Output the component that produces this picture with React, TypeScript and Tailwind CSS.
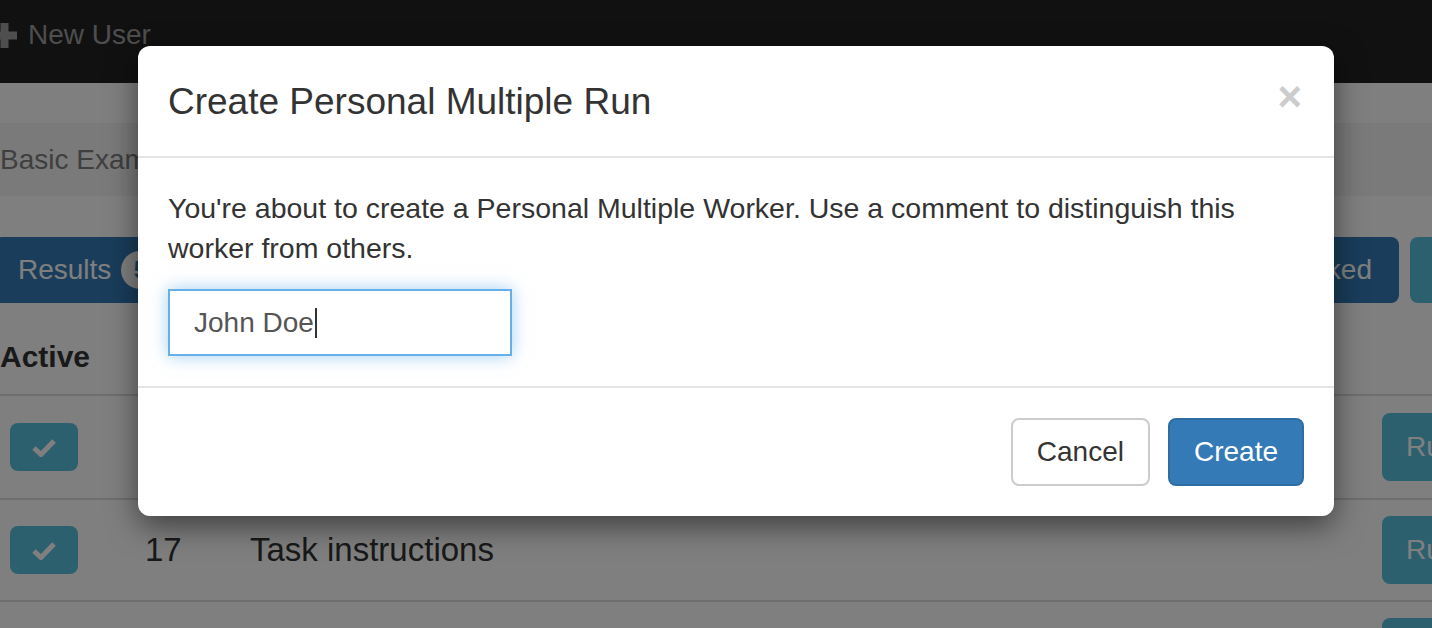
import React from "react";

function CheckIcon() {
  return (
    <svg width="24" height="19" viewBox="0 0 24 19" fill="none">
      <polyline points="2,10 9,16.5 22,3" stroke="#ffffff" strokeWidth="5" strokeLinejoin="miter" />
    </svg>
  );
}

function PlusIcon() {
  return (
    <svg width="25" height="25" viewBox="0 0 25 25">
      <rect x="8.5" y="0" width="8" height="25" fill="#9d9d9d" />
      <rect x="0" y="8.5" width="25" height="8" fill="#9d9d9d" />
    </svg>
  );
}

function Row({ id, title, h }: { id: string; title: string; h: string }) {
  return (
    <div className={`flex w-[1492px] items-center border-t-2 border-[#dddddd] ${h}`}>
      <div className="flex w-[145px] shrink-0 pl-[10px]">
        <div className="flex h-[48px] w-[68px] items-center justify-center rounded-[8px] bg-[#5bc0de]">
          <CheckIcon />
        </div>
      </div>
      <div className="w-[105px] shrink-0 text-[33px] leading-[40px] text-[#333333]">{id}</div>
      <div className="min-w-0 flex-1 text-[33px] leading-[40px] text-[#333333]">{title}</div>
      <div className="flex h-[68px] w-[110px] shrink-0 items-center rounded-[8px] bg-[#5bc0de] px-[24px] text-[28px] text-white">
        Run
      </div>
    </div>
  );
}

export default function App() {
  return (
    <div className="relative h-[628px] w-[1432px] overflow-hidden bg-white font-['Liberation_Sans',Arial,sans-serif]">
      {/* Background page */}
      <div className="flex h-[83px] items-start bg-[#222222] pt-[15px]">
        <div className="ml-[-8px] flex items-center gap-[11px] text-[28px] leading-[40px] text-[#9d9d9d]">
          <PlusIcon />
          <span>New User</span>
        </div>
      </div>
      <div className="h-[40px]" />
      <div className="flex h-[73px] items-center bg-[#f5f5f5] text-[28px] leading-[40px] text-[#7f7f7f]">
        Basic Example Project
      </div>
      <div className="h-[41px]" />
      <div className="flex h-[66px] w-[1492px] items-stretch justify-between">
        <div className="ml-[-6px] flex items-center gap-[10px] rounded-[8px] bg-[#337ab7] px-[24px] text-[28px] text-white">
          <span>Results</span>
          <span className="flex h-[38px] min-w-[38px] items-center justify-center rounded-full bg-white px-[12px] text-[24px] font-bold text-[#337ab7]">
            5
          </span>
        </div>
        <div className="flex items-stretch gap-[11px]">
          <div className="flex items-center rounded-[8px] bg-[#337ab7] px-[27px] text-[28px] text-white">
            Checked
          </div>
          <div className="w-[82px] rounded-[8px] bg-[#5bc0de]" />
        </div>
      </div>
      <div className="h-[91px] pt-[34px] text-[30px] font-bold leading-[40px] text-[#333333]">Active</div>
      <Row id="16" title="Welcome" h="h-[104px]" />
      <Row id="17" title="Task instructions" h="h-[102px]" />
      <Row id="18" title="Questionnaire" h="h-[102px]" />

      {/* Backdrop */}
      <div className="absolute inset-0 bg-black/50" />

      {/* Modal */}
      <div className="absolute left-[138px] top-[46px] w-[1196px] rounded-[12px] bg-white text-[#333333] shadow-[0_10px_30px_rgba(0,0,0,0.5)]">
        <div className="flex items-center justify-between border-b-2 border-[#e5e5e5] pb-[28px] pl-[30px] pr-[32px] pt-[30px]">
          <h4 className="text-[37px] font-normal leading-[52px] text-[#333333]">Create Personal Multiple Run</h4>
          <span className="mt-[-10px] text-[42px] font-bold leading-[42px] text-[#cccccc]">×</span>
        </div>
        <div className="p-[30px]">
          <p className="mb-[21px] text-[28.5px] leading-[40px]">
            You're about to create a Personal Multiple Worker. Use a comment to distinguish this worker from others.
          </p>
          <div className="flex h-[67px] w-[344px] items-center border-2 border-[#66afe9] px-[24px] text-[28px] text-[#555555] shadow-[0_0_16px_rgba(102,175,233,0.6)]">
            <span>John Doe</span>
            <span className="ml-[1px] inline-block h-[30px] w-[2px] bg-[#333333]" />
          </div>
        </div>
        <div className="flex justify-end gap-[18px] border-t-2 border-[#e5e5e5] p-[30px]">
          <div className="flex h-[68px] items-center rounded-[8px] border-2 border-[#cccccc] bg-white px-[24px] text-[28px] text-[#333333]">
            Cancel
          </div>
          <div className="flex h-[68px] items-center rounded-[8px] border-2 border-[#2e6da4] bg-[#337ab7] px-[24px] text-[28px] text-white">
            Create
          </div>
        </div>
      </div>
    </div>
  );
}
